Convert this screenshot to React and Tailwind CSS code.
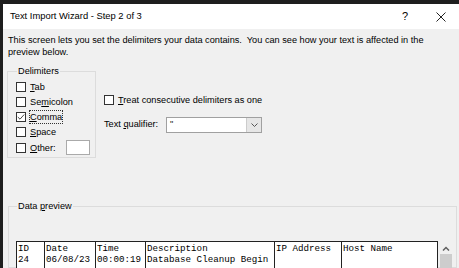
import React from "react";

function Box({ checked }) {
  return (
    <span className="w-[10px] h-[10px] border border-[#333] bg-white flex items-center justify-center shrink-0">
      {checked && (
        <svg width="8" height="8" viewBox="0 0 8 8">
          <path d="M0.8 4 L3 6.2 L7.2 1.5" stroke="#333" strokeWidth="0.9" fill="none" />
        </svg>
      )}
    </span>
  );
}

function Check({ label, u, rest, checked, focus, extra }) {
  return (
    <div className="flex items-center gap-[4px] h-[15px]">
      <Box checked={checked} />
      <span className={focus ? "outline outline-1 outline-dotted outline-[#333] leading-[12px]" : "leading-[12px]"}>
        {label}<span className="underline">{u}</span>{rest}
      </span>
      {extra}
    </div>
  );
}

export default function App() {
  const cols = [
    { w: 28, h: "ID", v: "24" },
    { w: 51, h: "Date", v: "06/08/23" },
    { w: 50, h: "Time", v: "00:00:19" },
    { w: 129, h: "Description", v: "Database Cleanup Begin" },
    { w: 67, h: "IP Address", v: "" },
    { w: 96, h: "Host Name", v: "" },
  ];
  return (
    <div className="w-[459px] h-[268px] overflow-hidden bg-[#1e1e1e] pl-[3px] pt-[4px] text-[#000]" style={{ fontFamily: '"Liberation Sans", Arial, sans-serif' }}>
      <div className="h-full bg-[#f0f0f0] flex flex-col">
        <div className="h-[25px] bg-white flex items-center pl-[7px] text-[9.4px] shrink-0">
          <span className="flex-1">Text Import Wizard - Step 2 of 3</span>
          <span className="w-[36px] text-center text-[11px]">?</span>
          <span className="w-[36px] flex justify-center">
            <svg width="10" height="10" viewBox="0 0 10 10">
              <path d="M0.5 0.5 L9.5 9.5 M9.5 0.5 L0.5 9.5" stroke="#222" strokeWidth="1" />
            </svg>
          </span>
        </div>
        <div className="text-[9.2px] leading-[12px] pl-[5px] pt-[5px] whitespace-nowrap">
          This screen lets you set the delimiters your data contains.&nbsp; You can see how your text is affected in the<br />preview below.
        </div>
        <div className="flex mt-[7px] pl-[4px] text-[9.2px]">
          <fieldset className="w-[89px] h-[93px] border border-[#dcdcdc] pl-[8px] pt-0">
            <legend className="px-[1px] ml-[1px] leading-[12px]">Delimiters</legend>
            <div className="flex flex-col mt-[2px]">
              <Check u="T" rest="ab" />
              <Check label="Se" u="m" rest="icolon" />
              <Check u="C" rest="omma" checked focus />
              <Check u="S" rest="pace" />
              <div className="mt-[1px]">
                <Check
                  u="O"
                  rest="ther:"
                  extra={<span className="ml-[6px] w-[24px] h-[15px] border border-[#aaa] bg-white shrink-0" />}
                />
              </div>
            </div>
          </fieldset>
          <div className="ml-[8px] pt-[29px]">
            <div className="flex items-center gap-[4px]">
              <Box />
              <span className="leading-[12px]"><span className="underline">T</span>reat consecutive delimiters as one</span>
            </div>
            <div className="flex items-center mt-[11px]">
              <span className="w-[62px] whitespace-nowrap">Text <span className="underline">q</span>ualifier:</span>
              <div className="w-[96px] h-[16px] border border-[#a0a0a0] bg-white flex">
                <span className="flex-1 pl-[3px] leading-[12px] text-[#222]">"</span>
                <span className="w-[15px] bg-[#e6e6e6] border-l border-[#ccc] flex items-center justify-center">
                  <svg width="7" height="4" viewBox="0 0 7 4"><path d="M0.5 0.5 L3.5 3.5 L6.5 0.5" stroke="#555" fill="none" /></svg>
                </span>
              </div>
            </div>
          </div>
        </div>
        <fieldset className="mt-[42px] ml-[5px] mr-[2px] flex-1 border border-[#dcdcdc] pl-[7px] text-[9.2px] min-h-0">
          <legend className="px-[1px] ml-[1px] leading-[12px]">Data <span className="underline">p</span>review</legend>
          <div className="flex mt-[29px]">
            <div className="flex border-t border-l border-[#222] bg-white" style={{ fontFamily: '"Liberation Mono", "Courier New", monospace' }}>
              {cols.map((c, i) => (
                <div key={i} style={{ width: c.w }} className="border-r border-[#222] text-[9.2px] leading-[11px] pl-[1px] pt-[1px] h-[40px] whitespace-nowrap overflow-hidden">
                  <div>{c.h}</div>
                  <div>{c.v}</div>
                </div>
              ))}
            </div>
            <div className="w-[16px] flex flex-col items-center">
              <svg width="8" height="5" viewBox="0 0 8 5" className="mt-[5px]"><path d="M1 4.5 L4 1.5 L7 4.5" stroke="#606060" strokeWidth="1.5" fill="none" /></svg>
              <div className="mt-[3px] w-[12px] flex-1 bg-[#cdcdcd]" />
            </div>
          </div>
        </fieldset>
      </div>
    </div>
  );
}
